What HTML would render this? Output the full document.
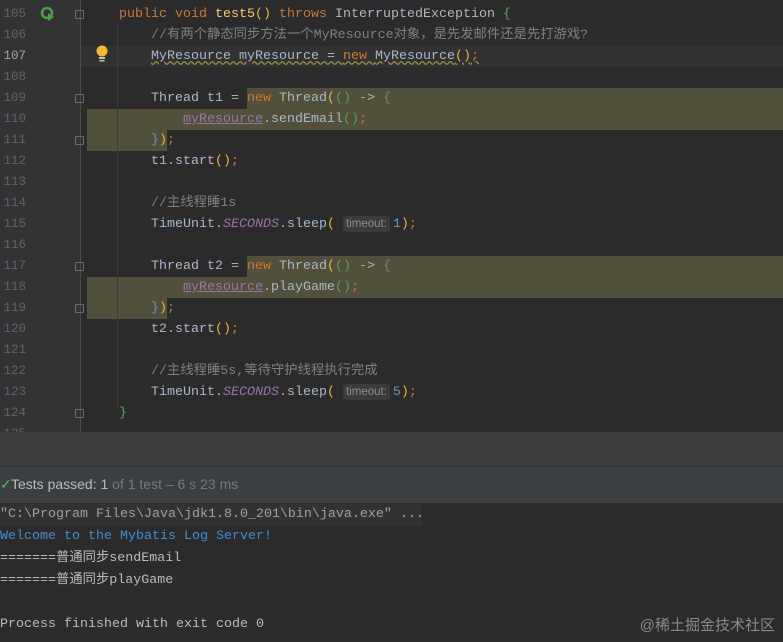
<!DOCTYPE html>
<html><head><meta charset="utf-8"><style>
*{margin:0;padding:0;box-sizing:border-box}
body{width:783px;height:642px;overflow:hidden;background:#2b2b2b;font-family:"Liberation Mono","Noto Sans CJK SC",monospace;font-size:13.33px;color:#a9b7c6;position:relative}
.gut{position:absolute;left:0;top:0;width:80px;height:432px;background:#313335}
.sep{position:absolute;left:80px;top:0;width:1px;height:432px;background:#4a4c4e}
.ln{position:absolute;left:0;width:26px;text-align:right;color:#606366;height:21px;line-height:21px;font-size:12.5px}
.ln.cur{color:#a4a3a3}
.row{position:absolute;left:87px;height:21px;line-height:21px;white-space:pre}
.code{position:absolute;height:21px;line-height:21px;white-space:pre}
.hl{position:absolute;background:#52503a}
.k{color:#cc7832}.f{color:#ffc66d}.c{color:#808080}.g{color:#629755}
.p{color:#9876aa;text-decoration:underline}.it{color:#9876aa;font-style:italic}
.y{color:#e8ba36}.gr{color:#54a857}.n{color:#6897bb}
.hint{display:inline-block;background:#3b3b3b;color:#8c8c8c;font-family:"Liberation Sans",sans-serif;font-size:11.5px;border-radius:3px;padding:0 3px;line-height:16px;margin-right:3px}
.fold{position:absolute;left:75px;width:9px;height:9px;border:1px solid #6c6c6c;border-radius:1px}
.band{position:absolute;left:0;top:432px;width:783px;height:34px;background:#3a3c3e}
.tests{position:absolute;left:0;top:466px;width:783px;height:37px;background:#3c3f41;border-top:1px solid #323232;font-family:"Liberation Sans",sans-serif;font-size:14px;line-height:34px;color:#bbbbbb;padding-left:11px}
.cl{position:absolute;left:0;height:22px;line-height:22px;white-space:pre;color:#bbbbbb}
</style></head><body>
<div class="gut"></div><div class="sep"></div>
<div style="position:absolute;left:81px;top:46px;width:702px;height:21px;background:#323232"></div>
<div class="hl" style="left:247px;top:88px;width:536px;height:21px"></div>
<div class="hl" style="left:87px;top:109px;width:696px;height:21px"></div>
<div class="hl" style="left:87px;top:130px;width:80px;height:21px"></div>
<div class="hl" style="left:247px;top:256px;width:536px;height:21px"></div>
<div class="hl" style="left:87px;top:277px;width:696px;height:21px"></div>
<div class="hl" style="left:87px;top:298px;width:80px;height:21px"></div>

<div class="ln" style="top:4px">105</div>
<div class="ln" style="top:25px">106</div>
<div class="ln cur" style="top:46px">107</div>
<div class="ln" style="top:67px">108</div>
<div class="ln" style="top:88px">109</div>
<div class="ln" style="top:109px">110</div>
<div class="ln" style="top:130px">111</div>
<div class="ln" style="top:151px">112</div>
<div class="ln" style="top:172px">113</div>
<div class="ln" style="top:193px">114</div>
<div class="ln" style="top:214px">115</div>
<div class="ln" style="top:235px">116</div>
<div class="ln" style="top:256px">117</div>
<div class="ln" style="top:277px">118</div>
<div class="ln" style="top:298px">119</div>
<div class="ln" style="top:319px">120</div>
<div class="ln" style="top:340px">121</div>
<div class="ln" style="top:361px">122</div>
<div class="ln" style="top:382px">123</div>
<div class="ln" style="top:403px">124</div>
<div class="ln" style="top:424px;height:8px;overflow:hidden">125</div>

<svg style="position:absolute;left:40px;top:6px" width="16" height="16"><circle cx="7" cy="7" r="5" fill="none" stroke="#4f9f4f" stroke-width="2.5"/><path d="M8 7l6 4-6 4z" fill="#4f9f4f"/></svg>
<svg style="position:absolute;left:95px;top:45px" width="14" height="18"><circle cx="7" cy="6" r="5.5" fill="#f4b82f"/><rect x="4" y="12" width="6" height="2" fill="#c0c0c0"/><rect x="4.5" y="15" width="5" height="1.5" fill="#c0c0c0"/></svg>
<div class="fold" style="top:10px"></div><div class="fold" style="top:94px"></div><div class="fold" style="top:136px"></div>
<div class="fold" style="top:262px"></div><div class="fold" style="top:304px"></div><div class="fold" style="top:409px"></div>
<div style="position:absolute;left:117px;top:25px;width:1px;height:384px;background:#3b3b3b"></div>

<div class="code" style="left:119px;top:4px"><span class="k">public void </span><span class="f">test5</span><span class="y">()</span> <span class="k">throws </span>InterruptedException <span class="gr">{</span></div>
<div class="code" style="left:151px;top:25px"><span class="c">//有两个静态同步方法一个MyResource对象，是先发邮件还是先打游戏?</span></div>
<div class="code" style="left:151px;top:46px"><span style="text-decoration:underline wavy #8f8f4a">MyResource myResource = <span class="k">new </span>MyResource<span class="y">()</span><span class="k">;</span></span></div>
<div class="code" style="left:151px;top:88px">Thread t1 = <span class="k">new </span>Thread<span class="y">(</span><span class="gr">()</span> -&gt; <span class="c">{</span></div>
<div class="code" style="left:183px;top:109px"><span class="p">myResource</span>.sendEmail<span class="gr">()</span><span class="k">;</span></div>
<div class="code" style="left:151px;top:130px"><span class="n">}</span><span class="y">)</span><span class="k">;</span></div>
<div class="code" style="left:151px;top:151px">t1.start<span class="y">()</span><span class="k">;</span></div>
<div class="code" style="left:151px;top:193px"><span class="c">//主线程睡1s</span></div>
<div class="code" style="left:151px;top:214px">TimeUnit.<span class="it">SECONDS</span>.sleep<span class="y">(</span> <span class="hint">timeout:</span><span class="n">1</span><span class="y">)</span><span class="k">;</span></div>
<div class="code" style="left:151px;top:256px">Thread t2 = <span class="k">new </span>Thread<span class="y">(</span><span class="gr">()</span> -&gt; <span class="c">{</span></div>
<div class="code" style="left:183px;top:277px"><span class="p">myResource</span>.playGame<span class="gr">()</span><span class="k">;</span></div>
<div class="code" style="left:151px;top:298px"><span class="n">}</span><span class="y">)</span><span class="k">;</span></div>
<div class="code" style="left:151px;top:319px">t2.start<span class="y">()</span><span class="k">;</span></div>
<div class="code" style="left:151px;top:361px"><span class="c">//主线程睡5s,等待守护线程执行完成</span></div>
<div class="code" style="left:151px;top:382px">TimeUnit.<span class="it">SECONDS</span>.sleep<span class="y">(</span> <span class="hint">timeout:</span><span class="n">5</span><span class="y">)</span><span class="k">;</span></div>
<div class="code" style="left:119px;top:403px"><span class="gr">}</span></div>

<div class="band"></div>
<div class="tests"><span style="position:absolute;left:0;top:0;color:#5fb85f">✓</span>Tests passed: 1 <span style="color:#787878">of 1 test – 6 s 23 ms</span></div>

<div style="position:absolute;left:0;top:504px;width:422px;height:22px;background:#323232"></div>
<div class="cl" style="top:504px;color:#a0a0a0">"C:\Program Files\Java\jdk1.8.0_201\bin\java.exe" ...</div>
<div class="cl" style="top:526px;color:#3f8fd0">Welcome to the Mybatis Log Server!</div>
<div class="cl" style="top:548px">=======普通同步sendEmail</div>
<div class="cl" style="top:570px">=======普通同步playGame</div>
<div class="cl" style="top:614px">Process finished with exit code 0</div>
<div style="position:absolute;right:8px;top:614px;font-family:'Liberation Sans','Noto Sans CJK SC',sans-serif;font-size:15px;color:#8a8a8a">@稀土掘金技术社区</div>
</body></html>
